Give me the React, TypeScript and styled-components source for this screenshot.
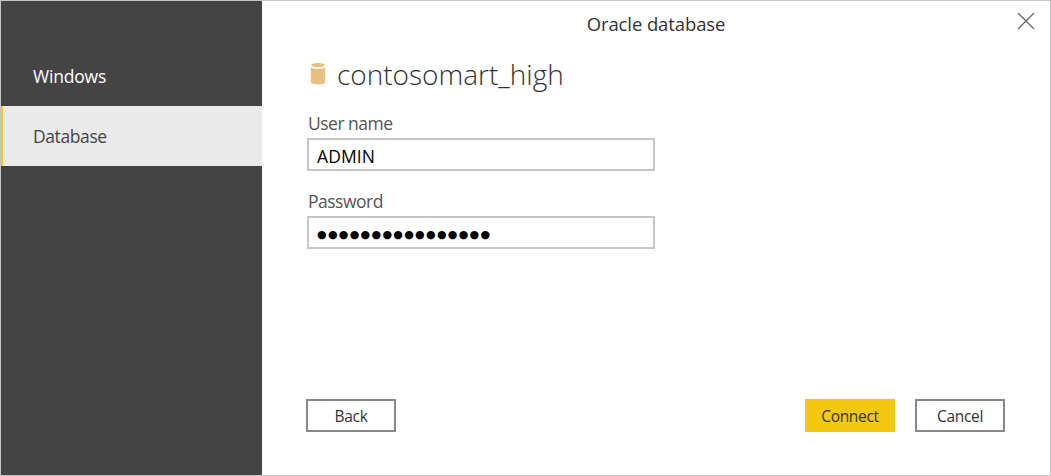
import React from "react";
import styled, { createGlobalStyle } from "styled-components";

const GlobalStyle = createGlobalStyle`
  *, *::before, *::after { box-sizing: border-box; }
  body { margin: 0; background: #fff; }
`;

const Dialog = styled.div`
  display: flex;
  width: 1051px;
  height: 476px;
  border: 1px solid #c4c4c4;
  background: #fff;
  color: #333;
  font-family: "Open Sans", "Noto Sans", sans-serif;
`;

const Sidebar = styled.nav`
  display: flex;
  flex-direction: column;
  flex: 0 0 261px;
  padding-top: 45px;
  background: #444;
`;

const NavItem = styled.div<{ $active?: boolean }>`
  display: flex;
  align-items: center;
  height: 60px;
  padding: 1px 0 0 30px;
  border-left: 2px solid ${(p) => (p.$active ? "#f2c811" : "transparent")};
  background: ${(p) => (p.$active ? "#eaeaea" : "transparent")};
  color: ${(p) => (p.$active ? "#444" : "#fff")};
`;

const Main = styled.main`
  display: flex;
  flex-direction: column;
  flex: 1;
`;

const TitleBar = styled.header`
  display: grid;
  grid-template-columns: 44px 1fr 44px;
  align-items: center;
  height: 46px;
`;

const Title = styled.div`
  grid-column: 2;
  padding-top: 1px;
  text-align: center;
`;

const CloseButton = styled.button`
  display: flex;
  align-self: start;
  justify-self: end;
  margin: 11px 15px 0 0;
  padding: 0;
  border: 0;
  background: none;
`;

const Content = styled.section`
  display: flex;
  flex-direction: column;
  align-items: flex-start;
  flex: 1;
  padding-left: 45px;
`;

const Heading = styled.h1`
  display: flex;
  align-items: center;
  gap: 11px;
  height: 54px;
  margin: 0 0 2px;
  padding-left: 3px;
  font-weight: 300;
`;

const Label = styled.label`
  display: flex;
  align-items: center;
  height: 24px;
  margin-top: 8px;
  padding: 1px 0 0 1px;
  color: #555;
`;

const Field = styled.div`
  display: flex;
  align-items: center;
  width: 348px;
  height: 33px;
  margin: 3px 0 10px;
  padding: 3px 0 0 8px;
  border: 2px solid #c6c6c6;
  color: #000;
`;

const Text = styled.span<{ $size: number; $spacing?: number }>`
  font-size: ${(p) => p.$size}px;
  letter-spacing: ${(p) => p.$spacing ?? 0}px;
  line-height: 1.3;
  white-space: nowrap;
`;

const Dots = styled.span`
  font-family: "DejaVu Sans", sans-serif;
  font-size: 11px;
  letter-spacing: 1.3px;
  line-height: 1;
`;

const Footer = styled.footer`
  display: flex;
  gap: 20px;
  height: 76px;
  padding: 0 45px 0 44px;
`;

const Button = styled.button<{ $primary?: boolean }>`
  display: flex;
  align-items: center;
  justify-content: center;
  width: 90px;
  height: 33px;
  padding: 2px 0 0;
  border: 2px solid ${(p) => (p.$primary ? "#f2c811" : "#888")};
  background: ${(p) => (p.$primary ? "#f2c811" : "#fff")};
  color: #333;
  font-family: inherit;
  &:first-child { margin-right: auto; }
`;

const DatabaseIcon = () => (
  <svg width="16" height="24" viewBox="0 0 16 24">
    <path d="M.8 5.2C3 7.2 13 7.2 15.2 5.2V20c0 3.2-14.4 3.2-14.4 0z" fill="#e8c080" />
    <ellipse cx="8" cy="3" rx="6.9" ry="2.1" fill="#e8c080" />
  </svg>
);

const CloseIcon = () => (
  <svg width="18" height="18" viewBox="0 0 18 18">
    <path d="M1 1l16 16M17 1L1 17" stroke="#666" strokeWidth="1.2" />
  </svg>
);

export default function App() {
  return (
    <>
      <GlobalStyle />
      <Dialog>
        <Sidebar>
          <NavItem><Text $size={17.5} $spacing={-0.2}>Windows</Text></NavItem>
          <NavItem $active><Text $size={17.5} $spacing={-0.4}>Database</Text></NavItem>
        </Sidebar>
        <Main>
          <TitleBar>
            <Title><Text $size={18.5} $spacing={-0.1}>Oracle database</Text></Title>
            <CloseButton aria-label="Close"><CloseIcon /></CloseButton>
          </TitleBar>
          <Content>
            <Heading>
              <DatabaseIcon />
              <Text $size={28}>contosomart_high</Text>
            </Heading>
            <Label><Text $size={17.5} $spacing={-0.5}>User name</Text></Label>
            <Field><Text $size={17.5} $spacing={0.1}>ADMIN</Text></Field>
            <Label><Text $size={17.5} $spacing={-0.5}>Password</Text></Label>
            <Field><Dots>●●●●●●●●●●●●●●●●</Dots></Field>
          </Content>
          <Footer>
            <Button><Text $size={15.5} $spacing={-0.3}>Back</Text></Button>
            <Button $primary><Text $size={15.5} $spacing={-0.3}>Connect</Text></Button>
            <Button><Text $size={15.5} $spacing={-0.3}>Cancel</Text></Button>
          </Footer>
        </Main>
      </Dialog>
    </>
  );
}
